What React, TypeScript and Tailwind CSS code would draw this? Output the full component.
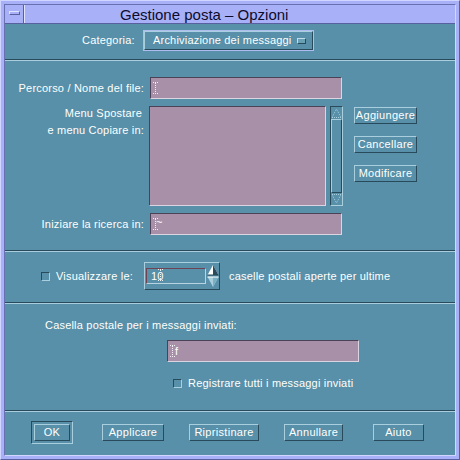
import React from 'react';

const raised = 'border border-t-[#a9cfdf] border-l-[#a9cfdf] border-r-[#284a5a] border-b-[#284a5a]';
const sunkenPink = 'border border-t-[#4c4258] border-l-[#4c4258] border-r-[#ddd4e2] border-b-[#ddd4e2] bg-[#a890a8]';
const sunkenTeal = 'border border-t-[#284a5a] border-l-[#284a5a] border-r-[#a9cfdf] border-b-[#a9cfdf]';
const etched = 'h-[2px] border-t border-b border-t-[#284a5a] border-b-[#a9cfdf]';

function Cursor() {
  return (
    <svg width="5" height="12" viewBox="0 0 5 12" className="shrink-0">
      <g stroke="#f0f0f0" strokeWidth="1" strokeDasharray="1 1" fill="none">
        <path d="M0 0.5H5" />
        <path d="M2.5 1V11" />
        <path d="M0 11.5H5" />
      </g>
    </svg>
  );
}

function Btn({ children, className = '' }: { children: React.ReactNode; className?: string }) {
  return (
    <div className={`${raised} h-[17px] flex items-center justify-center text-white text-[11px] leading-none tracking-[0.3px] ${className}`}>
      {children}
    </div>
  );
}

function Check() {
  return <div className={`${sunkenTeal} w-[9px] h-[9px] shrink-0`} />;
}

function Field({ className = '', children }: { className?: string; children?: React.ReactNode }) {
  return (
    <div className={`${sunkenPink} h-[22px] flex items-center pl-[2px] text-white text-[11px] ${className}`}>
      <Cursor />
      {children}
    </div>
  );
}

function ScrollArrow({ up }: { up?: boolean }) {
  return (
    <svg width="11" height="12" viewBox="0 0 11 12" className="block">
      <path
        d={up ? 'M1 10.5H10L5.5 2Z' : 'M1 1.5H10L5.5 10Z'}
        stroke="#a9cfdf"
        strokeDasharray="1 1"
        fill="none"
      />
    </svg>
  );
}

export default function App() {
  return (
    <div className="w-[460px] h-[460px] bg-[#a8b0f8] border-t border-l border-t-[#d0d6ff] border-l-[#d0d6ff] border-r border-b border-r-[#5860a0] border-b-[#5860a0] p-[3px] font-['Liberation_Sans',Arial,sans-serif]">
      <div className="w-full h-full flex flex-col border border-t-[#6870b0] border-l-[#6870b0] border-r-[#d0d6ff] border-b-[#d0d6ff]">
        {/* title bar */}
        <div className="h-[19px] flex shrink-0 border-b border-b-[#5860a0]">
          <div className="w-[19px] h-full flex items-start border-r border-r-[#5860a0]">
            <div className="mt-[6px] ml-[4px] w-[11px] h-[4px] border border-t-[#e0e4ff] border-l-[#e0e4ff] border-r-[#5860a0] border-b-[#5860a0]" />
          </div>
          <div className="flex-1 h-full border-l border-l-[#e0e4ff] pl-[95px] flex items-center text-[15px] leading-none text-[#0c0c2c]">
            Gestione posta – Opzioni
          </div>
        </div>

        {/* content */}
        <div className="flex-1 bg-[#5790a8] flex flex-col text-white text-[11px] tracking-[0.2px]">
          {/* category */}
          <div className="h-[35px] flex items-start pl-[77px] pt-[6px]">
            <div className="w-[61px] h-[21px] flex items-center">Categoria:</div>
            <div className="w-[171px] h-[21px] border border-[#aebcf0]">
              <div className={`${raised} w-full h-full flex items-center pl-[8px]`}>
                <span className="flex-1">Archiviazione dei messaggi</span>
                <div className="w-[9px] h-[6px] mr-[6px] border border-t-[#c0dcea] border-l-[#c0dcea] border-r-[#284a5a] border-b-[#284a5a] bg-[#6aa0b4]" />
              </div>
            </div>
          </div>
          <div className={etched} />

          {/* path & menu */}
          <div className="h-[189px] flex flex-col pt-[16px]">
            <div className="flex items-center">
              <div className="w-[139px] text-right">Percorso / Nome del file:</div>
              <Field className="ml-[6px] w-[192px]" />
            </div>
            <div className="flex items-start mt-[7px]">
              <div className="w-[139px] text-right leading-[17px] -mt-px">
                <div className="pr-[2px]">Menu Spostare</div>
                <div>e menu Copiare in:</div>
              </div>
              <div className={`${sunkenPink} ml-[5px] w-[177px] h-[100px]`} />
              <div className={`${sunkenTeal} ml-[4px] w-[13px] h-[100px] flex flex-col`}>
                <ScrollArrow up />
                <div className={`${raised} flex-1`} />
                <ScrollArrow />
              </div>
              <div className="ml-[11px] w-[63px] flex flex-col gap-[12px] pt-px">
                <Btn>Aggiungere</Btn>
                <Btn>Cancellare</Btn>
                <Btn>Modificare</Btn>
              </div>
            </div>
            <div className="flex items-center mt-[7px]">
              <div className="w-[139px] text-right">Iniziare la ricerca in:</div>
              <Field className="ml-[6px] w-[192px]">
                <span className="-ml-[2px] -mt-[3px]">~</span>
              </Field>
            </div>
          </div>
          <div className={etched} />

          {/* recent mailboxes */}
          <div className="h-[50px] flex items-start pt-[10px] pl-[36px]">
            <div className="h-[28px] flex items-center">
              <Check />
              <div className="ml-[6px] w-[88px]">Visualizzare le:</div>
            </div>
            <div className={`${raised} w-[76px] h-[28px] flex items-start`}>
              <div className="mt-[5px] ml-px w-[60px] h-[16px] flex items-center pl-[4px] border border-t-[#6e4454] border-l-[#6e4454] border-r-[#b8d4e0] border-b-[#b8d4e0]">
                <span>1</span>
                <span className="relative">
                  0
                  <span className="absolute left-[1px] top-[1px]"><Cursor /></span>
                </span>
              </div>
              <div className="ml-px mt-px w-[12px] flex flex-col">
                <svg width="12" height="12" viewBox="0 0 12 12" className="block">
                  <path d="M6 1L11.5 11H0.5Z" fill="#ffffff" />
                  <path d="M6 1L11.5 11H6Z" fill="#284a5a" />
                  <path d="M0.5 11H11.5" stroke="#284a5a" />
                </svg>
                <svg width="12" height="12" viewBox="0 0 12 12" className="block">
                  <path d="M0.5 1H11.5L6 11Z" fill="#a9cfdf" />
                  <path d="M6 11L11.5 1H6Z" fill="#7ab0c4" />
                  <path d="M0.5 1H11.5" stroke="#ffffff" />
                </svg>
              </div>
            </div>
            <div className="ml-[9px] h-[28px] flex items-center">caselle postali aperte per ultime</div>
          </div>
          <div className={etched} />

          {/* sent mailbox */}
          <div className="h-[106px] flex flex-col pl-[40px]">
            <div className="mt-[14px] leading-[14px]">Casella postale per i messaggi inviati:</div>
            <Field className="mt-[8px] ml-[122px] w-[192px]">
              <span>f</span>
            </Field>
            <div className="mt-[14px] ml-[128px] h-[14px] flex items-center">
              <Check />
              <span className="ml-[6px]">Registrare tutti i messaggi inviati</span>
            </div>
          </div>
          <div className={etched} />

          {/* buttons */}
          <div className="flex-1 flex items-start pt-[9px] pl-[26px]">
            <div className={`${sunkenTeal} w-[42px] h-[23px] flex items-center justify-center`}>
              <Btn className="w-[36px]">OK</Btn>
            </div>
            <Btn className="ml-[29px] mt-[3px] w-[62px]">Applicare</Btn>
            <Btn className="ml-[25px] mt-[3px] w-[70px]">Ripristinare</Btn>
            <Btn className="ml-[25px] mt-[3px] w-[59px]">Annullare</Btn>
            <Btn className="ml-[30px] mt-[3px] w-[51px]">Aiuto</Btn>
          </div>
        </div>
      </div>
    </div>
  );
}
